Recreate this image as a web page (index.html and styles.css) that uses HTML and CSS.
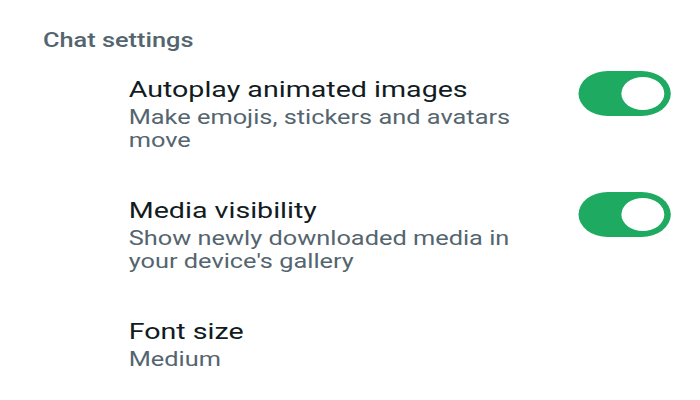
FILE: index.html
```html
<!DOCTYPE html>
<html>
<head>
<meta charset="utf-8">
<link rel="stylesheet" href="styles.css">
</head>
<body>
<div class="page">
  <div class="section-title">Chat settings</div>
  <div class="item">
    <div class="text">
      <div class="title">Autoplay animated images</div>
      <div class="sub">Make emojis, stickers and avatars move</div>
    </div>
    <div class="toggle on"><span class="knob"></span></div>
  </div>
  <div class="item">
    <div class="text">
      <div class="title">Media visibility</div>
      <div class="sub">Show newly downloaded media in your device's gallery</div>
    </div>
    <div class="toggle on"><span class="knob"></span></div>
  </div>
  <div class="item">
    <div class="text">
      <div class="title">Font size</div>
      <div class="sub">Medium</div>
    </div>
  </div>
</div>
</body>
</html>
```
FILE: styles.css
```css
html, body {
  margin: 0;
  padding: 0;
  background: #ffffff;
  overflow: hidden;
}
.page {
  width: 538px;
  height: 400px;
  transform: scaleX(1.3);
  transform-origin: 0 0;
  font-family: Roboto, "Noto Sans", sans-serif;
}
.section-title {
  padding: 29px 0 0 33px;
  font-size: 19.5px;
  line-height: 24px;
  font-weight: 500;
  color: #54656f;
}
.item {
  display: flex;
  align-items: flex-start;
  gap: 24px;
  padding: 23px 22px 22px 99px;
}
.text {
  flex: 1;
  min-width: 0;
}
.title {
  font-size: 22px;
  line-height: 28px;
  color: #111b21;
}
.sub {
  margin-top: 2px;
  font-size: 19.5px;
  line-height: 23px;
  color: #54656f;
}
.toggle {
  flex: none;
  position: relative;
  width: 71.5px;
  height: 45px;
  margin-top: -5px;
  border-radius: 23px;
  background: #1eaa60;
}
.knob {
  position: absolute;
  top: 6px;
  right: 5px;
  width: 33px;
  height: 33px;
  border-radius: 50%;
  background: #ffffff;
}
```
